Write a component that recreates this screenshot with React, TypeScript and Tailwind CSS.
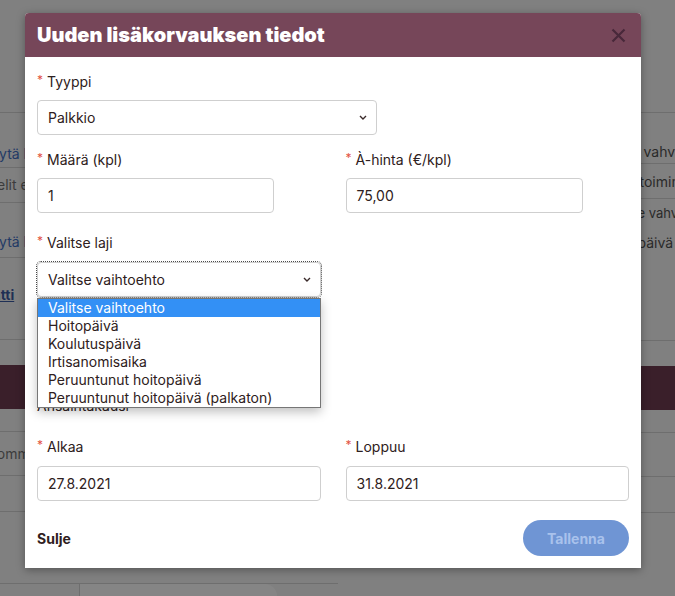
import React from 'react';

const font = { fontFamily: 'Inter, "Noto Sans", sans-serif' };

const Chevron = () => (
    <svg width="8" height="5" viewBox="0 0 8 5" className="shrink-0">
        <path d="M1 1l3 3 3-3" fill="none" stroke="#3a2a2a" strokeWidth="1.4" />
    </svg>
);

const Label: React.FC<{ text: string; required?: boolean }> = ({ text, required = true }) => (
    <div className="h-5 leading-5 text-[14px] text-[#2e2020] flex items-start">
        {required && <span className="text-[#e2533f] text-[12px] leading-[14px] mr-[4px] mt-[1px]">*</span>}
        <span>{text}</span>
    </div>
);

const Input: React.FC<{ value: string; className?: string }> = ({ value, className = '' }) => (
    <div className={`mt-[9px] h-[35px] border border-[#cfcfcf] rounded-[4px] px-[10px] flex items-center text-[14px] text-[#2e2020] ${className}`}>
        {value}
    </div>
);

const options = [
    'Valitse vaihtoehto',
    'Hoitopäivä',
    'Koulutuspäivä',
    'Irtisanomisaika',
    'Peruuntunut hoitopäivä',
    'Peruuntunut hoitopäivä (palkaton)',
];

const Background = () => (
    <div className="grid grid-cols-2 h-full text-[14px]">
        {/* left side of the page */}
        <div className="flex flex-col">
            <div className="h-[113px] border-b border-[#6e6e6e]" />
            <div className="h-[55px] border-b border-[#6e6e6e] pt-[30px] text-[#233a66] ml-[-18px]">Käytä lomaa</div>
            <div className="h-[35px] border-b border-[#6e6e6e] pt-[6px] text-[#3c3c3c] ml-[-12px]">Selit ennen</div>
            <div className="h-[55px] border-b border-[#6e6e6e] pt-[28px] text-[#233a66] ml-[-18px]">Käytä lomaa</div>
            <div className="h-[82px] border-b border-[#6e6e6e] pt-[26px] font-bold text-[#1e2f55] underline ml-[-27px]">Lisätti</div>
            <div className="h-[25px]" />
            <div className="h-[44px] bg-[#3a1f2a]" />
            <div className="h-[23px] border-b border-[#6e6e6e]" />
            <div className="h-[44px] border-b border-[#6e6e6e] pt-[11px] text-[#3c3c3c] ml-[-12px]">Kommentti</div>
            <div className="h-[36px] border-b border-[#6e6e6e]" />
            <div className="h-[72px] border-b border-[#6e6e6e]" />
            <div className="flex flex-1">
                <div className="w-[80px] border-r border-[#6e6e6e]" />
                <div className="w-[197px] bg-[#858585] rounded-tr-[18px]" />
            </div>
        </div>
        {/* right side of the page */}
        <div className="flex flex-col">
            <div className="h-[113px] border-b border-[#6e6e6e]" />
            <div className="h-[51px] border-b border-[#6e6e6e] pt-[28px] text-[#2a2a2a] pl-[306px] whitespace-nowrap">vahvistus</div>
            <div className="h-[35px] border-b border-[#6e6e6e] pt-[7px] text-[#2a2a2a] pl-[302px] whitespace-nowrap">toiminta</div>
            <div className="h-[142px] border-b border-[#6e6e6e] pt-[5px] text-[#2a2a2a] pl-[300px] whitespace-nowrap">
                <div className="text-[13px]">e vahvistus</div>
                <div className="mt-[8px]">päivä</div>
            </div>
            <div className="h-[25px]" />
            <div className="h-[44px] bg-[#3a1f2a]" />
            <div className="h-[23px] border-b border-[#6e6e6e]" />
            <div className="h-[44px] border-b border-[#6e6e6e]" />
            <div className="h-[36px] border-b border-[#6e6e6e]" />
        </div>
    </div>
);

export default function App() {
    return (
        <div className="relative w-[675px] h-[596px] overflow-hidden bg-[#808080]" style={font}>
            <Background />

            {/* Modal */}
            <div className="absolute left-[25px] top-[13px] w-[616px] bg-white rounded-t-[4px] shadow-[0_2px_8px_rgba(0,0,0,0.35)]">
                <div className="h-[44px] bg-[#764659] rounded-t-[4px] flex items-center justify-between pl-[12px] pr-[15px]">
                    <h2 className="text-white text-[20px] font-black">Uuden lisäkorvauksen tiedot</h2>
                    <svg width="15" height="15" viewBox="0 0 15 15">
                        <path d="M1.5 1.5l12 12M13.5 1.5l-12 12" stroke="#48283a" strokeWidth="2.2" />
                    </svg>
                </div>

                <div className="px-[12px] pt-[15px] pb-[12px]">
                    <Label text="Tyyppi" />
                    <div className="mt-[8px] w-[340px] h-[35px] border border-[#cfcfcf] rounded-[4px] pl-[10px] pr-[9px] flex items-center justify-between text-[14px] text-[#2e2020]">
                        <span>Palkkio</span>
                        <Chevron />
                    </div>

                    <div className="grid grid-cols-2 gap-x-[25px] mt-[15px]">
                        <div>
                            <Label text="Määrä (kpl)" />
                            <Input value="1" className="w-[237px] !mt-[8px]" />
                        </div>
                        <div>
                            <Label text="À-hinta (€/kpl)" />
                            <Input value="75,00" className="w-[237px] !mt-[8px]" />
                        </div>
                    </div>

                    <div className="grid grid-cols-2 gap-x-[25px] mt-[20px]">
                        <div>
                            <Label text="Valitse laji" />
                            <div className="relative mt-[9px]">
                                <div className="h-[35px] border border-[#cfcfcf] rounded-[4px] outline outline-1 outline-dotted outline-[#4a4a4a] pl-[10px] pr-[9px] flex items-center justify-between text-[14px] text-[#2e2020]">
                                    <span>Valitse vaihtoehto</span>
                                    <Chevron />
                                </div>
                                <ul className="absolute z-10 left-0 right-0 top-[36px] bg-white border border-[#767676] shadow-[0_4px_10px_rgba(0,0,0,0.25)] text-[14px] text-[#2e2020]">
                                    {options.map((o, i) => (
                                        <li
                                            key={o}
                                            className={`h-[18px] leading-[18px] px-[10px] whitespace-nowrap ${i === 0 ? 'bg-[#3390f5] text-white' : ''}`}
                                        >
                                            {o}
                                        </li>
                                    ))}
                                </ul>
                            </div>
                        </div>
                    </div>

                    <div className="mt-[99px]">
                        <Label text="Ansaintakausi" required={false} />
                    </div>

                    <div className="grid grid-cols-2 gap-x-[25px] mt-[21px]">
                        <div>
                            <Label text="Alkaa" />
                            <Input value="27.8.2021" />
                        </div>
                        <div>
                            <Label text="Loppuu" />
                            <Input value="31.8.2021" />
                        </div>
                    </div>

                    <div className="flex items-center justify-between mt-[19px]">
                        <button className="text-[14px] font-bold text-[#2e2020]">Sulje</button>
                        <button className="w-[106px] h-[36px] rounded-full bg-[#6f95d4] text-[#a9c2ec] text-[14px] font-bold">
                            Tallenna
                        </button>
                    </div>
                </div>
            </div>
        </div>
    );
}
